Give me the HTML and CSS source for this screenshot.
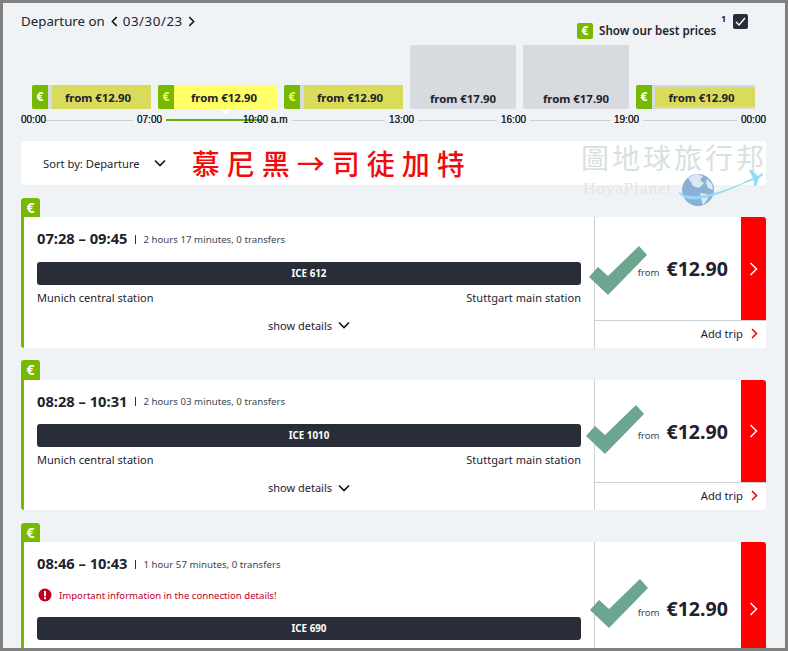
FILE: index.html
```html
<!DOCTYPE html>
<html lang="en">
<head>
<meta charset="utf-8">
<title>Departure on 03/30/23</title>
<link rel="stylesheet" href="styles.css">
</head>
<body>
<div class="frame">
  <header class="toolbar">
    <div class="date">
      <span>Departure on</span>
      <svg class="nav" viewBox="0 0 8 12"><path d="M6.5 1 1.5 6l5 5"/></svg>
      <span class="date-value">03/30/23</span>
      <svg class="nav" viewBox="0 0 8 12"><path d="M1.5 1l5 5-5 5"/></svg>
    </div>
    <div class="best">
      <span class="euro euro-best">€</span>
      <span class="best-label">Show our best prices</span>
      <sup class="footnote">1</sup>
      <span class="checkbox"><svg viewBox="0 0 15 15"><path d="M3 8l3 3 6-7"/></svg></span>
    </div>
  </header>

  <section class="chart">
    <div class="col col-best"><span class="euro euro-bar">€</span><span class="bar"><b>from €12.90</b></span></div>
    <div class="col col-best col-active"><span class="euro euro-bar euro-yellow">€</span><span class="bar"><b>from €12.90</b></span></div>
    <div class="col col-best"><span class="euro euro-bar euro-yellow">€</span><span class="bar"><b>from €12.90</b></span></div>
    <div class="col col-tall"><b>from €17.90</b></div>
    <div class="col col-tall"><b>from €17.90</b></div>
    <div class="col col-best col-last"><span class="euro euro-bar">€</span><span class="bar"><b>from €12.90</b></span></div>
  </section>

  <div class="axis">
    <span class="tick">00:00</span><i class="line g1"></i>
    <span class="tick">07:00</span><i class="line line-green g2"></i>
    <span class="tick tick-now">10:00 a.m</span><i class="line g3"></i>
    <span class="tick">13:00</span><i class="line g4"></i>
    <span class="tick">16:00</span><i class="line g5"></i>
    <span class="tick">19:00</span><i class="line g6"></i>
    <span class="tick">00:00</span>
    <i class="pointer"></i>
  </div>

  <div class="sortbar">
    <span class="sort">Sort by: Departure</span>
    <svg class="chev chev-sort" viewBox="0 0 12 8"><path d="M1 1.5l5 5 5-5"/></svg>
    <span class="route">慕尼黑→司徒加特</span>
  </div>

  <div class="mark">
    <span class="mark-cn">圖地球旅行邦</span>
    <span class="mark-en">HoyaPlanet</span>
    <svg class="globe" viewBox="0 0 90 36">
      <circle cx="17" cy="18" r="16" fill="#8bb0d6"/>
      <path d="M7 6l8-4 7 2-3 4 4 3-5 5-6-2-2-4zM19 21l7 1 1 5-5 6-2-6zM26 7l5 5 1 6-5-2-2-5z" fill="#dce8f2"/>
      <path d="M-2 20C4 33 30 27 65 10C32 24 8 29-2 20z" fill="#8fdcf5" stroke="#8fdcf5" stroke-width=".6"/>
      <path d="M63 10l9-4-4-8h3l6 6 4-3 1 2-4 3-3 8h-2V8l-9 3z" fill="#8fdcf5"/>
    </svg>
  </div>

  <main class="list">
    <article class="offer">
      <span class="euro euro-tab">€</span>
      <div class="card">
        <div class="info">
          <p class="times"><b>07:28 – 09:45</b><span class="dur">2 hours 17 minutes, 0 transfers</span></p>
          <div class="train">ICE 612</div>
          <div class="stations"><span>Munich central station</span><span>Stuttgart main station</span></div>
          <div class="details">show details <svg class="chev" viewBox="0 0 12 8"><path d="M1 1.5l5 5 5-5"/></svg></div>
        </div>
        <div class="buy">
          <div class="buy-top">
            <div class="price"><small>from</small><strong>€12.90</strong></div>
            <div class="go"><svg viewBox="0 0 9 14"><path d="M1.5 1l6 6-6 6"/></svg></div>
          </div>
          <div class="add">Add trip <svg viewBox="0 0 7 11"><path d="M1 1l4.5 4.5L1 10"/></svg></div>
          <svg class="tick-mark tm1" viewBox="0 0 58 49"><path d="M50 0l8 9-39 40L0 31l9-10 10 9z"/></svg>
        </div>
      </div>
    </article>

    <article class="offer">
      <span class="euro euro-tab">€</span>
      <div class="card">
        <div class="info">
          <p class="times"><b>08:28 – 10:31</b><span class="dur">2 hours 03 minutes, 0 transfers</span></p>
          <div class="train">ICE 1010</div>
          <div class="stations"><span>Munich central station</span><span>Stuttgart main station</span></div>
          <div class="details">show details <svg class="chev" viewBox="0 0 12 8"><path d="M1 1.5l5 5 5-5"/></svg></div>
        </div>
        <div class="buy">
          <div class="buy-top">
            <div class="price"><small>from</small><strong>€12.90</strong></div>
            <div class="go"><svg viewBox="0 0 9 14"><path d="M1.5 1l6 6-6 6"/></svg></div>
          </div>
          <div class="add">Add trip <svg viewBox="0 0 7 11"><path d="M1 1l4.5 4.5L1 10"/></svg></div>
          <svg class="tick-mark tm2" viewBox="0 0 58 49"><path d="M50 0l8 9-39 40L0 31l9-10 10 9z"/></svg>
        </div>
      </div>
    </article>

    <article class="offer">
      <span class="euro euro-tab">€</span>
      <div class="card card-last">
        <div class="info">
          <p class="times"><b>08:46 – 10:43</b><span class="dur">1 hour 57 minutes, 0 transfers</span></p>
          <p class="notice"><svg viewBox="0 0 14 14"><circle cx="7" cy="7" r="6.5"/><rect x="6" y="3" width="2" height="5.2" fill="#fff"/><rect x="6" y="9.2" width="2" height="2" fill="#fff"/></svg>Important information in the connection details!</p>
          <div class="train">ICE 690</div>
        </div>
        <div class="buy">
          <div class="buy-top buy-full">
            <div class="price"><small>from</small><strong>€12.90</strong></div>
            <div class="go"><svg viewBox="0 0 9 14"><path d="M1.5 1l6 6-6 6"/></svg></div>
          </div>
          <svg class="tick-mark tm3" viewBox="0 0 58 49"><path d="M50 0l8 9-39 40L0 31l9-10 10 9z"/></svg>
        </div>
      </div>
    </article>
  </main>
</div>
</body>
</html>
```
FILE: styles.css
```css
* { box-sizing: border-box; }
html, body { margin: 0; height: 100%; }
body { font-family: "Noto Sans", "Open Sans", sans-serif; color: #1e222b; overflow: hidden; }
p { margin: 0; }

.frame {
  position: relative;
  width: 788px;
  height: 651px;
  border: 3px solid #808080;
  background: #eff3f6;
  padding: 0 19px 0 18px;
  overflow: hidden;
}

/* toolbar */
.toolbar { position: relative; height: 42px; }
.date { display: flex; align-items: center; height: 16px; position: absolute; left: 0; top: 10px; font-size: 13.3px; white-space: nowrap; }
.date-value { letter-spacing: 0.55px; }
.nav { width: 7px; height: 11px; margin: 0 5px 0 6px; fill: none; stroke: #111; stroke-width: 1.7; }
.nav:last-child { margin: 0 0 0 5px; }
.best { position: absolute; left: 556px; top: 11px; width: 172px; height: 25px; }
.best-label { position: absolute; left: 22px; top: 9px; font-size: 11.6px; font-weight: 600; white-space: nowrap; line-height: 16px; }
.footnote { position: absolute; left: 144px; top: -1px; font-size: 9px; font-weight: 700; line-height: 12px; vertical-align: baseline; }
.checkbox { position: absolute; left: 156px; top: 0; width: 15px; height: 15px; background: #282d37; border-radius: 2px; }
.checkbox svg { display: block; width: 15px; height: 15px; fill: none; stroke: #fff; stroke-width: 1.4; }

.euro { display: flex; align-items: center; justify-content: center; background: #76b900; color: #fff; font-weight: 700; line-height: 1; }
.euro-best { position: absolute; left: 0; top: 9px; width: 16px; height: 16px; border-radius: 2px; font-size: 12px; }

/* chart */
.chart { display: flex; align-items: flex-end; gap: 7px; height: 64px; padding-left: 11px; }
.col { display: flex; height: 24px; width: 119px; font-size: 11.4px; color: #1e222b; white-space: nowrap; }
.col b { font-weight: 700; }
.euro-bar { flex: none; width: 16px; height: 24px; border-radius: 2px 0 0 2px; font-size: 12px; }
.euro-yellow { color: #f4f46c; }
.col-best { background: #d7dade; }
.bar { flex: 1; margin-left: 4px; padding: 1px 7px 0 0; display: flex; align-items: center; justify-content: center; background: #d8dc5a; }
.col-active { background: #ffff66; }
.col-active .bar { margin-left: 0; padding-right: 3px; background: #ffff66; }
.col-last .bar { margin: 2px 0 2px 3px; }
.col-tall { width: 106px; height: 64px; background: #d7dade; border-radius: 2px; align-items: flex-end; justify-content: center; padding-bottom: 2px; line-height: 16px; }

/* axis */
.axis { position: relative; display: flex; align-items: center; gap: 4px; height: 20px; padding-top: 1px; font-family: "Liberation Sans", Arial, sans-serif; font-size: 10px; }
.tick { flex: none; width: 25px; text-shadow: 0 0 0.4px #1e222b; line-height: 12px; position: relative; white-space: nowrap; }
.tick-now { width: 45px; }
.line { display: block; height: 1px; background: #ccd0d5; margin-top: 1px; }
.g1 { flex: 0 0 87px; margin-left: -4px; }
.g2 { flex: 0 0 96px; height: 2px; background: #6aaa0a; margin-right: -23px; }
.g3 { flex: 0 0 93px; }
.g4 { flex: 0 0 79px; }
.g5 { flex: 0 0 80px; }
.g6 { flex: 0 0 94px; }
.pointer { position: absolute; left: 199px; top: 0; border: 6px solid transparent; border-top-color: #fff; border-bottom: 0; width: 0; height: 0; }

/* sort bar */
.sortbar { display: flex; align-items: center; height: 44px; margin-top: 12px; padding-left: 22px; background: #fff; border-radius: 3px; white-space: nowrap; }
.sort { font-size: 11.2px; }
.chev { width: 12px; height: 8px; fill: none; stroke: #111; stroke-width: 1.6; }
.chev-sort { margin-left: 14px; }
.route { margin-left: 26px; font-family: "Noto Sans CJK TC", "Noto Sans CJK SC", sans-serif; font-size: 28px; font-weight: 500; letter-spacing: 7px; color: #f00c0c; line-height: 1; }

/* watermark */
.mark { position: absolute; left: 578px; top: 138px; width: 190px; height: 70px; pointer-events: none; }
.mark-cn { position: absolute; left: 0; top: 0; font-family: "Noto Sans CJK TC", sans-serif; font-size: 28px; letter-spacing: 3px; color: #d6e2e0; line-height: 32px; white-space: nowrap; }
.mark-en { position: absolute; left: 2px; top: 38px; font-family: "Liberation Serif", serif; font-size: 17px; letter-spacing: 1px; color: #dfe6e6; white-space: nowrap; }
.globe { position: absolute; left: 100px; top: 31px; width: 90px; height: 36px; overflow: visible; }

/* offers */
.list { margin-top: 12.75px; display: flex; flex-direction: column; gap: 12.5px; }
.euro-tab { width: 19px; height: 19.5px; border-radius: 3px 3px 0 0; font-size: 14px; }
.card { display: flex; height: 130.5px; background: #fff; border-left: 3px solid #76b900; border-radius: 0 3px 3px 3px; position: relative; }
.card-last { height: 160px; }
.info { width: 570px; padding: 13px 13px 0; flex: none; }
.times { display: flex; align-items: center; height: 18px; white-space: nowrap; }
.times b { font-size: 14.7px; font-weight: 700; padding-bottom: 2px; }
.dur { margin-left: 8px; padding-left: 8px; font-size: 9.7px; color: #3a4452; position: relative; }
.dur::before { content: ""; position: absolute; left: 0; top: 2px; bottom: 2px; width: 1px; background: #333; }
.train { height: 23px; margin-top: 13.5px; background: #282d37; border-radius: 3px; color: #fff; font-size: 9.8px; font-weight: 700; line-height: 24px; text-align: center; }
.stations { display: flex; justify-content: space-between; margin-top: 5px; font-size: 11px; letter-spacing: 0.05px; line-height: 15px; }
.details { display: flex; justify-content: center; align-items: center; gap: 6px; margin-top: 13px; font-size: 11px; line-height: 15px; }
.notice { display: flex; align-items: center; gap: 7px; margin-top: 14px; height: 16px; font-size: 9.6px; color: #c0001e; white-space: nowrap; padding-left: 1px; }
.notice svg { width: 14px; height: 14px; fill: #c0001e; flex: none; }
.notice + .train { margin-top: 14px; }

.buy { position: relative; flex: 1; display: flex; flex-direction: column; border-left: 1px solid #ccd0d5; }
.buy-top { display: flex; height: 102.5px; flex: none; }
.buy-full { height: 134px; }
.price { flex: 1; display: flex; align-items: baseline; justify-content: flex-end; padding: 40px 13px 0 0; white-space: nowrap; }
.buy-full .price { padding-top: 55px; }
.price small { font-size: 9.5px; color: #3a4452; margin-right: 7px; }
.price strong { font-size: 19.6px; font-weight: 700; line-height: 24px; }
.go { flex: none; width: 25px; background: #f00; border-radius: 0 3px 0 0; display: flex; align-items: center; justify-content: center; }
.go svg { width: 9px; height: 14px; fill: none; stroke: #fff; stroke-width: 1.5; }
.add { flex: 1; display: flex; align-items: center; justify-content: flex-end; gap: 8px; border-top: 1px solid #ccd0d5; padding: 0 8px 2px 0; font-size: 11.2px; }
.add svg { width: 7px; height: 11px; fill: none; stroke: #e00; stroke-width: 1.5; }
.tick-mark { position: absolute; width: 58px; height: 49px; fill: #6ca690; }
.tm1 { left: -6px; top: 29px; }
.tm2 { left: -9px; top: 25px; }
.tm3 { left: -5px; top: 37px; }
```
